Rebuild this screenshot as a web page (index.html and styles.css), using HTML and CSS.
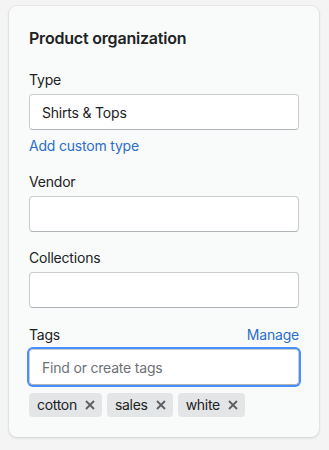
FILE: index.html
```html
<!DOCTYPE html>
<html lang="en">
<head>
    <meta charset="UTF-8">
    <meta name="viewport" content="width=device-width, initial-scale=1.0">
    <title>Product organization</title>
    <link rel="stylesheet" href="styles.css">
</head>
<body>
    <div class="card">
        <h2 class="card-title">Product organization</h2>

        <!-- Type -->
        <div class="field">
            <label class="label" for="type">Type</label>
            <input class="input" type="text" id="type" value="Shirts &amp; Tops">
            <a class="link add-type" href="#">Add custom type</a>
        </div>

        <!-- Vendor -->
        <div class="field">
            <label class="label" for="vendor">Vendor</label>
            <input class="input" type="text" id="vendor">
        </div>

        <!-- Collections -->
        <div class="field">
            <label class="label" for="collections">Collections</label>
            <input class="input" type="text" id="collections">
        </div>

        <!-- Tags -->
        <div class="field">
            <div class="label-row">
                <label class="label" for="tags">Tags</label>
                <a class="link" href="#">Manage</a>
            </div>
            <input class="input focused" type="text" id="tags" placeholder="Find or create tags">
            <div class="tags">
                <span class="tag"><span>cotton</span><svg class="tag-x" viewBox="0 0 10 10"><path d="M1 1l8 8M9 1l-8 8"/></svg></span>
                <span class="tag"><span>sales</span><svg class="tag-x" viewBox="0 0 10 10"><path d="M1 1l8 8M9 1l-8 8"/></svg></span>
                <span class="tag"><span>white</span><svg class="tag-x" viewBox="0 0 10 10"><path d="M1 1l8 8M9 1l-8 8"/></svg></span>
            </div>
        </div>
    </div>
</body>
</html>
```

FILE: styles.css
```css
body {
    font-family: Inter, "Noto Sans", sans-serif;
    margin: 0;
    padding: 6px 10px 12px 9px;
    background-color: #f4f4f4;
    color: #202223;
    font-size: 14px;
    line-height: 20px;
    letter-spacing: -0.2px;
}

.card {
    background-color: #f9fafa;
    border-radius: 8px;
    box-shadow: 0 0 0 1px rgba(63, 63, 68, 0.05), 0 1px 3px rgba(63, 63, 68, 0.15);
    padding: 20px;
}

.card-title {
    margin: 0 0 20px;
    font-size: 16px;
    line-height: 24px;
    font-weight: 600;
}

.field {
    margin-bottom: 16px;
}

.field:nth-child(4) {
    margin-bottom: 17px;
}

.field:last-child {
    margin-bottom: 0;
}

.label {
    display: block;
    margin-bottom: 4px;
}

.label-row {
    display: flex;
    justify-content: space-between;
    margin-bottom: 4px;
}

.label-row .label {
    margin-bottom: 0;
}

.input {
    display: block;
    width: 100%;
    height: 36px;
    padding: 0 12px;
    box-sizing: border-box;
    border: 1px solid #c9cccf;
    border-bottom-color: #aeb4b9;
    border-radius: 4px;
    background-color: #fff;
    font-family: inherit;
    font-size: 14px;
    letter-spacing: inherit;
    color: #202223;
    outline: none;
}

.input::placeholder {
    color: #6d7175;
}

.input.focused {
    box-shadow: 0 0 0 2px #458fff;
}

.link {
    color: #2c6ecb;
    text-decoration: none;
}

.add-type {
    display: block;
    margin-top: 6px;
    margin-bottom: 2px;
}

.tags {
    display: flex;
    gap: 5px;
    margin-top: 8px;
}

.tag {
    display: flex;
    align-items: center;
    gap: 8px;
    height: 24px;
    padding: 0 7px 0 8px;
    background-color: #e4e5e7;
    border-radius: 4px;
    letter-spacing: -0.3px;
}

.tag-x {
    width: 10px;
    height: 10px;
    stroke: #5c5f62;
    stroke-width: 1.8;
    fill: none;
}
```
